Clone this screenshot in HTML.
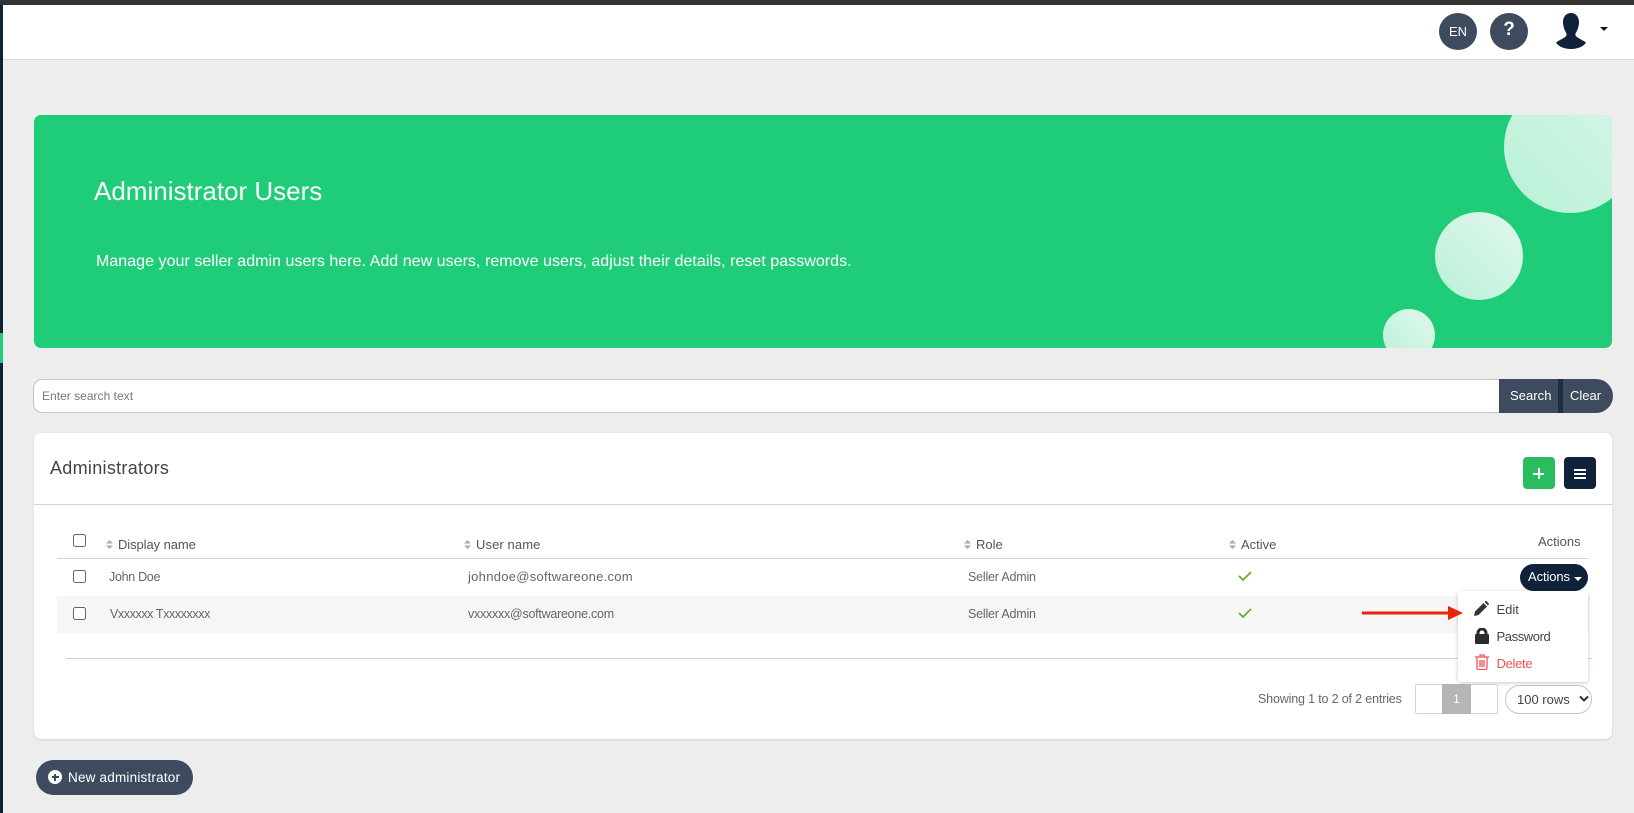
<!DOCTYPE html>
<html><head><meta charset="utf-8"><style>
html,body{margin:0;padding:0;width:1634px;height:813px;overflow:hidden;background:#ededed;font-family:"Liberation Sans",sans-serif}
div,span,svg{position:absolute;box-sizing:border-box}
.t{white-space:nowrap;line-height:20px;height:20px;color:#555}
.h{font-size:13px;color:#555}
.d{font-size:12.5px;color:#666}
.cb{width:13px;height:13px;border:1px solid #666;border-radius:2.5px;background:#fff;left:73px}
.w{color:#fff}
</style></head><body>
<div style="left:0;top:0;width:1634px;height:5px;background:#333"></div>
<div style="left:3px;top:5px;width:1631px;height:55px;background:#fff;border-bottom:1px solid #ddd"></div>
<div style="left:0;top:5px;width:3px;height:808px;background:#0f2239"></div>
<div style="left:0;top:333px;width:3px;height:30px;background:#20ce7a"></div>

<div style="left:1439px;top:13px;width:38px;height:37px;border-radius:50%;background:#3e4b5e"></div>
<div class="t w" style="left:1439px;top:22px;width:38px;text-align:center;font-size:13px">EN</div>
<div style="left:1490px;top:13px;width:38px;height:37px;border-radius:50%;background:#3e4b5e"></div>
<div class="t w" style="left:1490px;top:20px;width:38px;text-align:center;font-size:19px;font-weight:bold">?</div>
<svg style="left:1556px;top:13px" width="30" height="36" viewBox="0 0 30 36"><path fill="#0f2239" d="M15 0C10 0 7 4 7 9c0 5 2 9 3.500 11.500v2C9 25 4 26.500 0 29.500c1.500 3 7 6.500 15 6.500s13.500-3.500 15-6.500c-4-3-9-4.500-10.500-7v-2C21 18 23 14 23 9c0-5-3-9-8-9z"/></svg>
<div style="left:1600px;top:27px;border:4px solid transparent;border-top:4px solid #111;border-bottom:0"></div>

<div style="left:34px;top:115px;width:1578px;height:233px;border-radius:7px;background:#1fcd79;overflow:hidden">
<div style="left:1470px;top:-34px;width:132px;height:132px;border-radius:50%;background:linear-gradient(45deg,#b9f0d7,#d6f7e8)"></div>
<div style="left:1400.500px;top:97px;width:88px;height:88px;border-radius:50%;background:linear-gradient(45deg,#b9f0d7,#e2f8ee)"></div>
<div style="left:1349px;top:194px;width:52px;height:52px;border-radius:50%;background:linear-gradient(45deg,#b9f0d7,#e2f8ee)"></div>
</div>
<div class="t w" style="left:94px;top:179px;height:24px;line-height:24px;font-size:26px">Administrator Users</div>
<div class="t w" style="left:96px;top:252px;font-size:16px;letter-spacing:.04px">Manage your seller admin users here. Add new users, remove users, adjust their details, reset passwords.</div>

<div style="left:33px;top:379px;width:1467px;height:34px;background:#fff;border:1px solid #c4c4c4;border-radius:9px 0 0 9px"></div>
<div class="t" style="left:42px;top:386px;font-size:12px;color:#777;letter-spacing:.02px">Enter search text</div>
<div style="left:1499px;top:379px;width:114px;height:34px;background:#3e4b5e;border-radius:0 17px 17px 0"></div>
<div style="left:1558px;top:379px;width:5px;height:34px;background:#1d2d42"></div>
<div class="t w" style="left:1510px;top:386px;font-size:13px;letter-spacing:.05px">Search</div>
<div class="t w" style="left:1570px;top:386px;font-size:13px">Clear</div>

<div style="left:34px;top:433px;width:1578px;height:306px;background:#fff;border-radius:7px;box-shadow:0 1px 2px rgba(0,0,0,.12)"></div>
<div class="t" style="left:50px;top:458px;font-size:18px;letter-spacing:.3px;color:#444">Administrators</div>
<div style="left:1523px;top:457px;width:32px;height:32px;border-radius:4px;background:#29bd60"></div>
<div style="left:1533px;top:472.500px;width:11px;height:2px;background:#fff"></div>
<div style="left:1537.500px;top:468px;width:2px;height:11px;background:#fff"></div>
<div style="left:1564px;top:457px;width:32px;height:32px;border-radius:4px;background:#0f2239"></div>
<div style="left:1574px;top:469px;width:12px;height:2px;background:#fff"></div>
<div style="left:1574px;top:473px;width:12px;height:2px;background:#fff"></div>
<div style="left:1574px;top:477px;width:12px;height:2px;background:#fff"></div>
<div style="left:34px;top:504px;width:1578px;height:1px;background:#d3d3d3"></div>

<div style="left:57px;top:558px;width:1532px;height:1px;background:#d3d3d3"></div>
<div style="left:57px;top:596px;width:1532px;height:37px;background:#f6f6f6"></div>
<div class="cb" style="top:534px"></div><div class="cb" style="top:570px"></div><div class="cb" style="top:607px"></div>

<svg style="left:106px;top:540px" width="7" height="9"><path fill="#aaa" d="M3.500 0L7 3.500H0zM3.500 9L0 5.500h7z"/></svg>
<svg style="left:464px;top:540px" width="7" height="9"><path fill="#aaa" d="M3.500 0L7 3.500H0zM3.500 9L0 5.500h7z"/></svg>
<svg style="left:964px;top:540px" width="7" height="9"><path fill="#aaa" d="M3.500 0L7 3.500H0zM3.500 9L0 5.500h7z"/></svg>
<svg style="left:1229px;top:540px" width="7" height="9"><path fill="#aaa" d="M3.500 0L7 3.500H0zM3.500 9L0 5.500h7z"/></svg>
<div class="t h" style="left:118px;top:535px;letter-spacing:-.08px">Display name</div>
<div class="t h" style="left:476px;top:535px;letter-spacing:.1px">User name</div>
<div class="t h" style="left:976px;top:535px">Role</div>
<div class="t h" style="left:1241px;top:535px">Active</div>
<div class="t h" style="left:1538px;top:532px">Actions</div>

<div class="t d" style="left:109px;top:567px;letter-spacing:-.3px">John Doe</div>
<div class="t d" style="left:468px;top:567px;font-size:13px;letter-spacing:.28px">johndoe@softwareone.com</div>
<div class="t d" style="left:968px;top:567px;letter-spacing:-.2px">Seller Admin</div>
<div class="t d" style="left:110px;top:604px;letter-spacing:-.4px">Vxxxxxx Txxxxxxxx</div>
<div class="t d" style="left:468px;top:604px;letter-spacing:-.25px">vxxxxxx@softwareone.com</div>
<div class="t d" style="left:968px;top:604px;letter-spacing:-.2px">Seller Admin</div>
<svg style="left:1238px;top:570px" width="14" height="12"><path fill="none" stroke="#6aaa2a" stroke-width="1.700" d="M1 6l4 4 8-8"/></svg>
<svg style="left:1238px;top:607px" width="14" height="12"><path fill="none" stroke="#6aaa2a" stroke-width="1.700" d="M1 6l4 4 8-8"/></svg>

<div style="left:1520px;top:564px;width:68px;height:27px;border-radius:14px;background:#0f2239"></div>
<div class="t w" style="left:1528px;top:567px;font-size:13px;letter-spacing:-.1px">Actions</div>
<div style="left:1574px;top:577px;border:4px solid transparent;border-top:4px solid #fff;border-bottom:0"></div>

<div style="left:66px;top:658px;width:1526px;height:1px;background:#d3d3d3"></div>
<div style="left:1458px;top:591px;width:130px;height:91px;background:#fff;border-radius:3px;box-shadow:0 1px 4px rgba(0,0,0,.22)"></div>
<svg style="left:1474px;top:601px" width="15" height="15" viewBox="0 0 15 15"><path fill="#333" d="M0 15l1-4.500L9.500 2l3.500 3.500L4.500 14zM10.500 1l.7-.7c.400-.400 1-.400 1.400 0l2 2c.400.400.400 1 0 1.400l-.7.700z"/></svg>
<svg style="left:1475px;top:628px" width="14" height="16" viewBox="0 0 14 16"><path fill="#2b2b2b" d="M1.500 6V5a5.500 5.500 0 0 1 11 0v1h.5a1 1 0 0 1 1 1v8a1 1 0 0 1-1 1H1a1 1 0 0 1-1-1V7a1 1 0 0 1 1-1zm3 0h5V5a2.500 2.500 0 0 0-5 0z"/></svg>
<svg style="left:1475px;top:654px" width="14" height="16" viewBox="0 0 14 16"><path fill="none" stroke="#ef5350" stroke-width="1.300" d="M0 3h14M5 3V1h4v2M2 3v11a1.500 1.500 0 0 0 1.500 1.500h7A1.500 1.500 0 0 0 12 14V3M5 6v7M7 6v7M9 6v7"/></svg>
<div class="t" style="left:1496.500px;top:600px;font-size:13px;color:#444">Edit</div>
<div class="t" style="left:1496.500px;top:627px;font-size:13px;color:#444;letter-spacing:-.4px">Password</div>
<div class="t" style="left:1496.500px;top:654px;font-size:13px;color:#ef5350;letter-spacing:-.3px">Delete</div>
<svg style="left:1360px;top:603px" width="104" height="20"><path fill="#e8230a" d="M2 8.500h86V3l15 7-15 7v-5.500H2z"/></svg>

<div class="t" style="left:1258px;top:689px;font-size:12.500px;color:#666;letter-spacing:-.16px">Showing 1 to 2 of 2 entries</div>
<div style="left:1415px;top:684px;width:83px;height:30px;background:#fff;border:1px solid #d3d3d3;border-radius:2px"></div>
<div style="left:1442px;top:684px;width:29px;height:30px;background:#b5b5b5"></div>
<div class="t w" style="left:1442px;top:689px;width:29px;text-align:center;font-size:12px">1</div>
<div style="left:1505px;top:685px;width:87px;height:29px;background:#fff;border:1px solid #c4c4c4;border-radius:15px"></div>
<div class="t" style="left:1517px;top:690px;font-size:13px;color:#444">100 rows</div>
<svg style="left:1579px;top:695px" width="10" height="8"><path fill="none" stroke="#333" stroke-width="2" d="M1 1.500l4 4 4-4"/></svg>

<div style="left:36px;top:760px;width:157px;height:35px;border-radius:18px;background:#3e4b5e"></div>
<div style="left:48px;top:770px;width:14px;height:14px;border-radius:50%;background:#fff"></div>
<div style="left:51.500px;top:776px;width:7px;height:2px;background:#3e4b5e"></div>
<div style="left:54px;top:773.500px;width:2px;height:7px;background:#3e4b5e"></div>
<div class="t w" style="left:68px;top:768px;font-size:13.500px;letter-spacing:.2px">New administrator</div>
</body></html>
